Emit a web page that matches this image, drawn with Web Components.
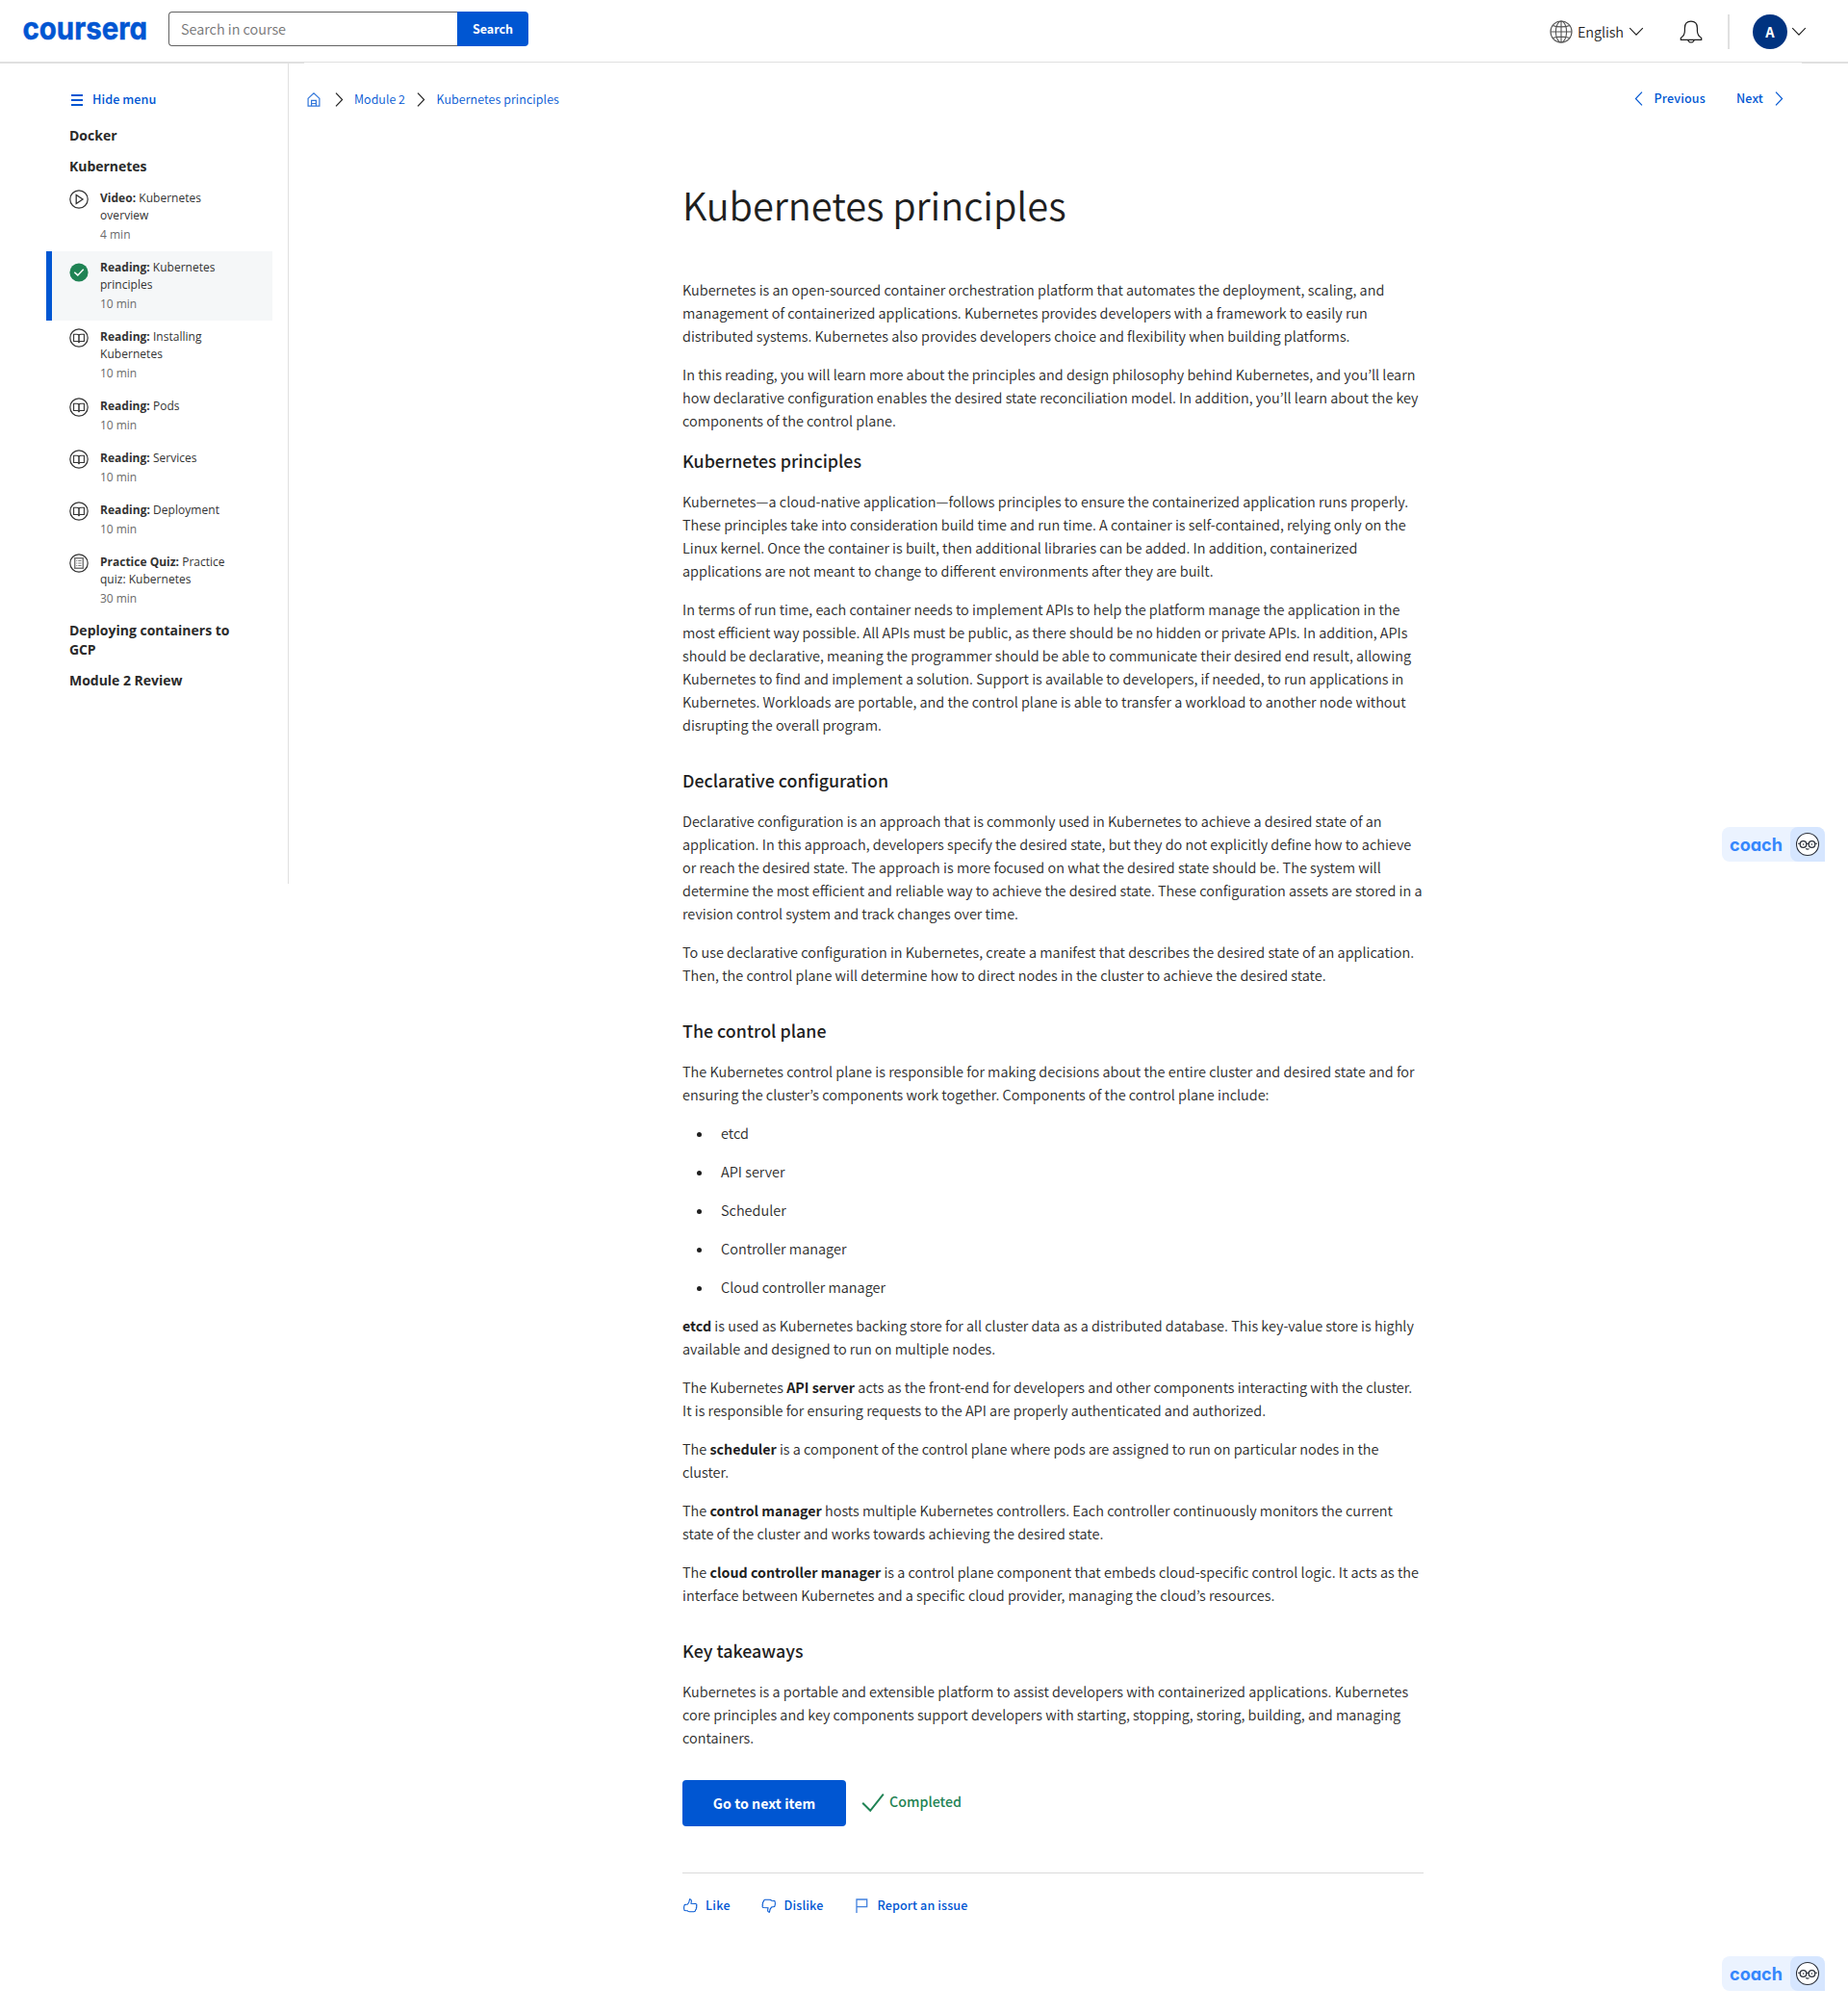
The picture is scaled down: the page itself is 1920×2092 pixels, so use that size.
<!DOCTYPE html>
<html lang="en">
<head>
<meta charset="utf-8">
<title>Kubernetes principles | Coursera</title>
<style>
  body { margin: 0; background: #fff; color: #1f1f1f; font: 350 14.49px/24px "Noto Sans CJK JP", "Open Sans", sans-serif; }
</style>
</head>
<body>
<course-page></course-page>
<script>
const define = (name, html, setup) => customElements.define(name, class extends HTMLElement {
  connectedCallback() {
    if (this.shadowRoot) return;
    const root = this.attachShadow({ mode: 'open' });
    root.innerHTML = typeof html === 'function' ? html(this) : html;
    if (setup) setup(this, root);
  }
});

/* One-line label whose tracking is adjusted to a given width. */
define('fit-label', `<style>:host{display:inline-block;white-space:nowrap}</style><slot></slot>`, el => {
  const w = parseFloat(el.getAttribute('w'));
  const natural = el.getBoundingClientRect().width;
  if (w && natural) el.style.letterSpacing = ((w - natural) / el.textContent.length).toFixed(3) + 'px';
});

/* Icons */
const ICONS = {
  globe: [24, 24, `<g stroke-width="1.1"><circle cx="12" cy="12" r="11"/><ellipse cx="12" cy="12" rx="5.6" ry="11"/><path d="M12 1v22M1 12h22M3.2 5.4c4.6 2 13 2 17.6 0M3.2 18.6c4.6-2 13-2 17.6 0"/></g>`],
  bell: [24, 25, `<path stroke-width="1.2" d="M1.3 20.4v-2c2.8-1.8 4.1-4 4.1-7.4V8.2C5.4 4 7.6 1.2 11.9 1.2S18.4 4 18.4 8.2v2.8c0 3.4 1.4 5.6 4.300 7.400v2zM8.700 20.600a3.400 3.400 0 0 0 6.500 0"/>`],
  down: [16, 10, `<path stroke-width="1.15" d="M1.200 1.200l6.800 7L14.800 1.200"/>`],
  right: [9, 15, `<path stroke-width="1.15" d="M1 .7l6.600 6.800L1 14.300"/>`],
  left: [9, 15, `<path stroke-width="1.15" d="M8 .7L1.400 7.500 8 14.300"/>`],
  menu: [12, 12, `<path stroke-width="2" d="M0 1h12M0 6h12M0 11h12"/>`],
  home: [14, 15, `<path stroke-width="1.200" d="M.7 6.600L7 .9l6.300 5.700M1.100 6.400v7.800h11.800V6.400M4.600 14V8.300h4.800V14M4.600 11.500h4.800M1.100 14h11.800"/>`],
  play: [20, 20, `<circle cx="10" cy="10" r="9.200" stroke-width="1.200"/><path stroke-width="1.300" d="M7.200 5.400v9.200L14 10z"/>`],
  book: [20, 20, `<circle cx="10" cy="10" r="9.200" stroke-width="1.200"/><path stroke-width="1.100" d="M10 6.800C9.300 6.300 8.600 6.200 7.800 6.200H4.600v7.300h3.800c.8 0 1.300.3 1.600.9.300-.6.800-.9 1.600-.9h3.800V6.200h-3.200c-.8 0-1.500.1-2.200.6z"/><path stroke-width="1.500" d="M10 6.800v8"/>`],
  quiz: [20, 20, `<circle cx="10" cy="10" r="9.200" stroke-width="1.200"/><g stroke="#777"><path stroke-width="1.500" d="M5.700 4.800h8.600v10.400H5.700z"/><path d="M9.300 7.500h3.200M9.300 10h3.200M9.300 12.500h3.200M7.300 7.500h1M7.300 10h1M7.300 12.500h1" stroke-width="1.100"/></g>`],
  done: [20, 20, `<circle cx="10" cy="10" r="9.600" fill="#1f8354" stroke="none"/><path stroke="#fff" stroke-width="1.500" d="M5.300 9.700l3.500 3.200 5.900-6.200"/>`],
  check: [24, 21, `<path stroke-width="2" d="M1.200 10.800l8 8L22.800 1.700"/>`],
  like: [15, 15, `<path stroke-width="1.050" d="M1.300 6.500L4.400 6C5.700 4.800 6.300 3.300 6.500.8c1.600.1 2 1.100 1.800 2.500L8 5.300l4.700.2c1.300.2 1.500 1.600.8 2.300.6.700.5 1.600-.2 2.100.3.800 0 1.500-.6 1.900 0 1.100-.7 1.900-1.700 2H6.600c-.9 0-1.700-.4-2.300-1l-3.100-.2C.4 10.700.5 8.500 1.300 6.500z"/>`],
  flag: [13, 15, `<path stroke-width="1.300" stroke-opacity=".75" d="M1 15V1h10.700v7.600H1"/>`]
};
define('ui-icon', el => {
  const [w, h, body] = ICONS[el.getAttribute('name')];
  return `<style>:host{display:block;flex:none;width:${w}px;height:${h}px}svg{display:block}</style>
  <svg width="${w}" height="${h}" viewBox="0 0 ${w} ${h}" fill="none" stroke="currentColor">${body}</svg>`;
});

/* Header */
define('site-header', `
<style>
  :host{display:block;height:65px;box-sizing:border-box;border-bottom:1px solid #e0e0e0;background:#fff}
  header{display:flex;align-items:flex-start;height:64px;padding-left:24px;padding-right:43px}
  .logo{margin-top:10px;width:151px;height:40px;overflow:visible}
  .logo text{font:700 33px Inter,sans-serif;font-feature-settings:"cv11";fill:#0056d2;stroke:#0056d2;stroke-width:.5px}
  .search{display:flex;margin-top:12px;height:36px}
  .field{box-sizing:border-box;width:300px;border:1px solid #636363;border-right:0;border-radius:4px 0 0 4px;padding-left:12px;line-height:34px;color:#757575}
  .go{width:74px;background:#0056d2;color:#fff;border-radius:0 4px 4px 0;text-align:center;font-weight:700;font-size:12.500px;line-height:35px}
  .right{margin-left:auto;display:flex;align-items:center;height:66px}
  .lang{display:flex;align-items:center;gap:5px}
  .sep{width:2px;height:36px;background:#e0e0e0;margin:0 24px 0 26px}
  .avatar{width:36px;height:36px;border-radius:50%;background:#003380;color:#fff;text-align:center;font-weight:700;line-height:36px;margin-right:4px}
</style>
<header>
  <svg class="logo"><text x="-.5" y="31" textLength="129.500" lengthAdjust="spacingAndGlyphs">coursera</text></svg>
  <div class="search"><div class="field"><fit-label w="109">Search in course</fit-label></div><div class="go"><fit-label w="42">Search</fit-label></div></div>
  <div class="right">
    <div class="lang"><ui-icon name="globe" style="color:#555"></ui-icon><fit-label w="48">English</fit-label><ui-icon name="down"></ui-icon></div>
    <ui-icon name="bell" style="margin-left:37px"></ui-icon>
    <div class="sep"></div>
    <div class="avatar">A</div><ui-icon name="down"></ui-icon>
  </div>
</header>`);

/* Sidebar */
define('nav-item', el => `
<style>
  :host{display:block;margin-left:-24px;width:235px;box-sizing:border-box;padding:8px 40px 9px 24px;font:400 12px/18px "Open Sans",sans-serif;color:#333}
  :host([active]){background:#f5f7f8;border-left:6px solid #0056d2;padding-left:18px}
  .row{display:flex;gap:12px}
  ui-icon{color:#333}
  :host([active]) ui-icon{margin-top:4px}
  small{display:block;font-size:12px;margin-top:3px;line-height:16px;color:#6b6b6b}
</style>
<div class="row"><ui-icon name="${el.getAttribute('icon')}"></ui-icon><div><slot></slot><small><fit-label w="${el.getAttribute('time') === '4 min' ? 31.5 : 38}">${el.getAttribute('time')}</fit-label></small></div></div>`);
define('nav-title', `<style>:host{display:block;margin-bottom:12px;font:700 14px/20px "Open Sans",sans-serif;color:#2a2a2a}</style><slot></slot>`);
define('course-nav', `
<style>
  :host{display:block;box-sizing:border-box;width:300px;height:852px;border-right:1px solid #e0e0e0;padding:25px 0 0 72px}
  .hide{display:flex;align-items:center;gap:10px;padding-left:2px;height:24px;margin-bottom:16px;color:#0056d2;font-weight:500;font-size:12.700px}
  .hide ui-icon{margin-top:1px}
  b{font-weight:700}
  nav-item fit-label{display:block;width:max-content}
</style>
<div class="hide"><ui-icon name="menu"></ui-icon><fit-label w="66.500">Hide menu</fit-label></div>
<nav-title><fit-label w="49.500">Docker</fit-label></nav-title>
<nav-title style="margin-bottom:6px"><fit-label w="80.500">Kubernetes</fit-label></nav-title>
<nav-item icon="play" time="4 min"><fit-label w="105"><b>Video:</b> Kubernetes</fit-label><fit-label w="50.500">overview</fit-label></nav-item>
<nav-item icon="done" time="10 min" active><fit-label w="119.500"><b>Reading:</b> Kubernetes</fit-label><fit-label w="54.500">principles</fit-label></nav-item>
<nav-item icon="book" time="10 min"><fit-label w="105.500"><b>Reading:</b> Installing</fit-label><fit-label w="65">Kubernetes</fit-label></nav-item>
<nav-item icon="book" time="10 min"><fit-label w="82.500"><b>Reading:</b> Pods</fit-label></nav-item>
<nav-item icon="book" time="10 min"><fit-label w="100.500"><b>Reading:</b> Services</fit-label></nav-item>
<nav-item icon="book" time="10 min"><fit-label w="124"><b>Reading:</b> Deployment</fit-label></nav-item>
<nav-item icon="quiz" time="30 min" style="margin-bottom:6px"><fit-label w="129.500"><b>Practice Quiz:</b> Practice</fit-label><fit-label w="94.500">quiz: Kubernetes</fit-label></nav-item>
<nav-title><fit-label w="166.500">Deploying containers to</fit-label><br><fit-label w="27.500">GCP</fit-label></nav-title>
<nav-title><fit-label w="117.500">Module 2 Review</fit-label></nav-title>`);

/* Breadcrumb and pager */
define('crumb-bar', `
<style>
  :host{display:flex;justify-content:space-between;height:24px;padding:26px 19px 0 19px;color:#0056d2;font-size:12.500px;line-height:24px}
  div{display:flex;align-items:center}
  .c ui-icon{color:#1f1f1f;margin:0 11.500px 0 12px}
  .c ui-icon:first-child{color:#0056d2;opacity:.8;margin:0}
  .c ui-icon:nth-child(2){margin:0 11px 0 15px}
  .p{font-weight:500;height:22px}
</style>
<div class="c"><ui-icon name="home"></ui-icon><ui-icon name="right"></ui-icon><fit-label w="53">Module 2</fit-label><ui-icon name="right"></ui-icon><fit-label w="127.500">Kubernetes principles</fit-label></div>
<div class="p"><ui-icon name="left"></ui-icon><fit-label w="53.500" style="margin:0 32px 0 12px">Previous</fit-label><fit-label w="28" style="margin-right:12px">Next</fit-label><ui-icon name="right"></ui-icon></div>`);

/* Article */
define('doc-heading', `<style>:host{display:block;font-size:17.830px;font-weight:500;line-height:24px;margin:33px 0 19px}</style><slot></slot>`);
define('doc-para', `<style>:host{display:block;margin-bottom:16px;color:#2b2b2b}::slotted(b){font-weight:700;font-size:14.250px;color:#1f1f1f}</style><slot></slot>`);
define('doc-item', `<style>:host{display:flex;align-items:center;padding-left:14.500px;margin-bottom:16px;color:#2b2b2b}:host::before{content:"";width:5px;height:5px;margin:2px 20.500px 0 0;border-radius:50%;background:#1f1f1f}</style><slot></slot>`);
define('doc-actions', `
<style>
  :host{display:block;padding-top:16px}
  .top{display:flex;align-items:flex-start;height:96px;border-bottom:1px solid #dadada}
  .btn{width:170px;height:48px;border-radius:4px;background:#0056d2;color:#fff;font-weight:700;text-align:center;line-height:49px;font-size:14.200px;margin-right:16px}
  .top ui-icon{color:#1f8354;margin:13px 5px 0 0}
  .done{color:#1f8354;font-weight:500;font-size:14.250px;margin-top:10px}
  .fb{display:flex;align-items:center;padding-top:21px;height:24px;color:#0056d2;font-weight:500;font-size:12.600px}
</style>
<div class="top"><div class="btn"><fit-label w="106.500">Go to next item</fit-label></div><ui-icon name="check"></ui-icon><fit-label class="done" w="75">Completed</fit-label></div>
<div class="fb"><ui-icon name="like" style="margin-left:.5px"></ui-icon><fit-label w="26" style="margin:0 32px 0 8.500px">Like</fit-label><ui-icon name="like" style="transform:rotate(180deg)"></ui-icon><fit-label w="41" style="margin:0 33px 0 8.500px">Dislike</fit-label><ui-icon name="flag"></ui-icon><fit-label w="94" style="margin-left:10px">Report an issue</fit-label></div>`);
define('doc-article', `
<style>
  :host{display:block;width:770px;margin:70px 0 0 409px}
  h1{margin:0 0 50px;font-weight:350;font-size:39.800px;line-height:54px}
</style>
<h1><fit-label w="398.500">Kubernetes principles</fit-label></h1>
<doc-para>Kubernetes is an open-sourced container orchestration platform that automates the deployment, scaling, and management of containerized applications. Kubernetes provides developers with a framework to easily run distributed systems. Kubernetes also provides developers choice and flexibility when building platforms.</doc-para>
<doc-para>In this reading, you will learn more about the principles and design philosophy behind Kubernetes, and you’ll learn how declarative configuration enables the desired state reconciliation model. In addition, you’ll learn about the key components of the control plane.</doc-para>
<doc-heading style="margin-top:17px"><fit-label w="186">Kubernetes principles</fit-label></doc-heading>
<doc-para>Kubernetes—a cloud-native application—follows principles to ensure the containerized application runs properly. These principles take into consideration build time and run time. A container is self-contained, relying only on the Linux kernel. Once the container is built, then additional libraries can be added. In addition, containerized applications are not meant to change to different environments after they are built.</doc-para>
<doc-para>In terms of run time, each container needs to implement APIs to help the platform manage the application in the most efficient way possible. All APIs must be public, as there should be no hidden or private APIs. In addition, APIs should be declarative, meaning the programmer should be able to communicate their desired end result, allowing Kubernetes to find and implement a solution. Support is available to developers, if needed, to run applications in Kubernetes. Workloads are portable, and the control plane is able to transfer a workload to another node without disrupting the overall program.</doc-para>
<doc-heading><fit-label w="214">Declarative configuration</fit-label></doc-heading>
<doc-para>Declarative configuration is an approach that is commonly used in Kubernetes to achieve a desired state of an application. In this approach, developers specify the desired state, but they do not explicitly define how to achieve or reach the desired state. The approach is more focused on what the desired state should be. The system will determine the most efficient and reliable way to achieve the desired state. These configuration assets are stored in a revision control system and track changes over time.</doc-para>
<doc-para>To use declarative configuration in Kubernetes, create a manifest that describes the desired state of an application. Then, the control plane will determine how to direct nodes in the cluster to achieve the desired state.</doc-para>
<doc-heading><fit-label w="149.500">The control plane</fit-label></doc-heading>
<doc-para>The Kubernetes control plane is responsible for making decisions about the entire cluster and desired state and for ensuring the cluster’s components work together. Components of the control plane include:</doc-para>
<doc-item>etcd</doc-item><doc-item>API server</doc-item><doc-item>Scheduler</doc-item><doc-item>Controller manager</doc-item><doc-item>Cloud controller manager</doc-item>
<doc-para><b>etcd</b> is used as Kubernetes backing store for all cluster data as a distributed database. This key-value store is highly available and designed to run on multiple nodes.</doc-para>
<doc-para>The Kubernetes <b>API server</b> acts as the front-end for developers and other components interacting with the cluster. It is responsible for ensuring requests to the API are properly authenticated and authorized.</doc-para>
<doc-para>The <b>scheduler</b> is a component of the control plane where pods are assigned to run on particular nodes in the cluster.</doc-para>
<doc-para>The <b>control manager</b> hosts multiple Kubernetes controllers. Each controller continuously monitors the current state of the cluster and works towards achieving the desired state.</doc-para>
<doc-para>The <b>cloud controller manager</b> is a control plane component that embeds cloud-specific control logic. It acts as the interface between Kubernetes and a specific cloud provider, managing the cloud’s resources.</doc-para>
<doc-heading><fit-label w="125.500">Key takeaways</fit-label></doc-heading>
<doc-para>Kubernetes is a portable and extensible platform to assist developers with containerized applications. Kubernetes core principles and key components support developers with starting, stopping, storing, building, and managing containers.</doc-para>
<doc-actions></doc-actions>`);

/* Floating coach button */
define('coach-button', `
<style>
  :host{position:absolute;left:1789px;display:flex;width:107px;height:36px;border-radius:8px 8px 0 8px;overflow:hidden;background:#ebf3ff}
  .face{width:36px;margin-left:auto;border-radius:8px 0 0 8px;background:#d6e6ff}
  svg{display:block}
  text{font:700 18.500px Inter,sans-serif;font-feature-settings:"cv11";fill:#3587fc}
</style>
<svg width="71" height="36"><text x="8" y="24.500" textLength="55" lengthAdjust="spacingAndGlyphs">coach</text></svg>
<div class="face"><svg width="36" height="36" fill="none" stroke="#2a2f3a"><circle cx="18" cy="18" r="11.500" fill="#fff" stroke-width="1.100"/><circle cx="13.500" cy="18" r="3.300" stroke-width="1.300"/><circle cx="22.500" cy="18" r="3.300" stroke-width="1.300"/><path stroke-width="1.100" d="M8 17.200h2.300M16.800 17.600q1.200-.7 2.400 0M25.700 17.200H28M16.200 22.600q1.800 1 3.400 0"/><circle cx="13.700" cy="18" r=".8" fill="#2a2f3a" stroke="none"/><circle cx="22.300" cy="18" r=".8" fill="#2a2f3a" stroke="none"/></svg></div>`);

define('course-page', `
<style>
  :host{display:block;position:relative;height:2092px;overflow:hidden}
  main{display:flex}
  .left{border-top:1px solid #e0e0e0;width:316px;height:852px;margin-right:-16px}
  .content{flex:1}
  .edge{width:48px;height:1px;background:#e0e0e0}
</style>
<site-header></site-header>
<main><div class="left"><course-nav></course-nav></div><div class="content"><crumb-bar></crumb-bar><doc-article></doc-article></div><div class="edge"></div></main>
<coach-button style="top:859px"></coach-button>
<coach-button style="top:2032px"></coach-button>`);
</script>
</body>
</html>
